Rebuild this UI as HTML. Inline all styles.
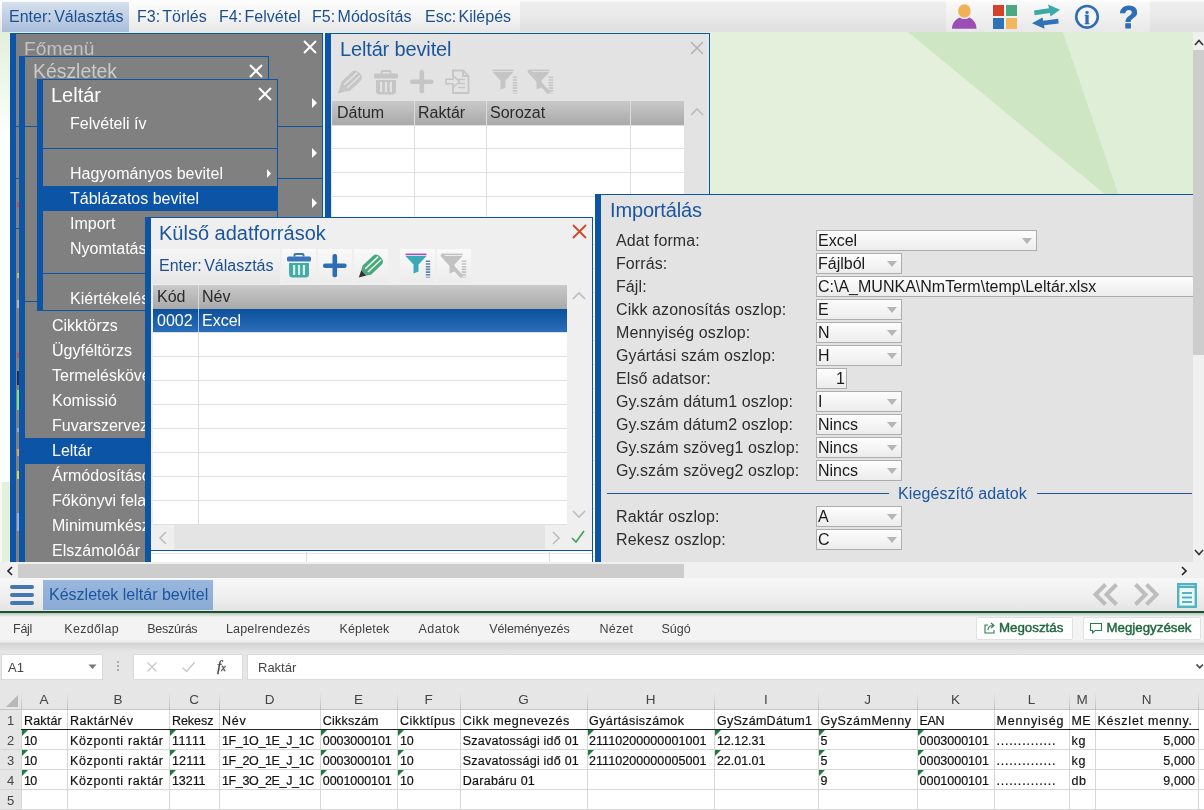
<!DOCTYPE html>
<html lang="hu"><head><meta charset="utf-8"><title>Készletek leltár bevitel</title>
<style>
*{box-sizing:border-box;margin:0;padding:0}
html,body{width:1204px;height:810px;overflow:hidden}
body{position:relative;will-change:transform;background:#e4f0dc;font-family:"Liberation Sans",Arial,sans-serif;font-size:16px;color:#222}
.a{position:absolute}
.t{position:absolute;white-space:pre;line-height:1}
#topbar{left:0;top:0;width:1204px;height:32px;background:linear-gradient(#fff 0,#f6f6f6 1px,#eeeeee 3px,#e9e9e9 50%,#dfdfdf 100%)}
#topbar .t{top:9px;color:#1c4f8f;font-size:16px;word-spacing:-2px}
.win{position:absolute;overflow:hidden}
.menu{background:#808080}
.mi{position:absolute;color:#fff;font-size:16px;white-space:pre;line-height:1}
.bl{background:#0c54a6}
.hd{background:linear-gradient(#c9c9c9,#a9a9a9)}
.lbl{position:absolute;left:616px;font-size:16px;letter-spacing:0.1px;color:#2e2e2e;white-space:pre;line-height:1}
.inp{position:absolute;left:816px;height:21px;background:linear-gradient(#fdfdfd,#ececec);border:1px solid #adadad;font-size:16px;line-height:20px;padding-left:1px;color:#1a1a1a;white-space:pre}
.cb{width:86px}
.cb:after{content:"";position:absolute;right:4.5px;top:7px;border:5.5px solid transparent;border-top:6.5px solid #b6b6b6;border-bottom:0}
</style></head><body>
<!-- WORKSPACE BG -->
<svg class="a" style="left:0;top:32px" width="1204" height="532"><polygon points="908,0 1063,0 1124,178" fill="#cfe6c5"/><polygon points="1063,0 1193,0 1193,532 1124,178" fill="#dfeed6"/><defs><linearGradient id="lg" x1="0" y1="0" x2="0" y2="1"><stop offset="0" stop-color="#e2efda"/><stop offset="1" stop-color="#fdfefd"/></linearGradient></defs><rect x="0" y="0" width="10" height="100" fill="url(#lg)"/><rect x="0" y="100" width="10" height="350" fill="#fdfefd"/><rect x="0" y="450" width="2" height="82" fill="#f6faf3"/></svg>
<!-- TOPBAR -->
<div id="topbar" class="a">
<div class="a" style="left:0;top:1px;width:520px;height:31px;background:linear-gradient(#fdfdfd,#f4f4f4 50%,#e7e7e7)"></div><div class="a" style="left:2px;top:2px;width:127px;height:30px;background:linear-gradient(#d6e0ed,#a9bedb)"></div>
<span class="t" style="left:9px">Enter: Választás</span>
<span class="t" style="left:137px">F3: Törlés</span>
<span class="t" style="left:219px">F4: Felvétel</span>
<span class="t" style="left:312px">F5: Módosítás</span>
<span class="t" style="left:425px">Esc: Kilépés</span>
</div>
<!--ICONS_S--><div class="a" style="left:946px;top:0;width:204px;height:32px;background:linear-gradient(#fff 0,#f8f8f8 3px,#f1f1f1 50%,#e8e8e8)"></div>
<svg class="a" style="left:950px;top:2px" width="30" height="30"><ellipse cx="14.4" cy="9" rx="6.3" ry="6.8" fill="#f0b055"/><path d="M2 26.8C2 20 7 16.5 10 15.5C12 17.5 17 17.5 19 15.5C22 16.5 26.5 20 26.5 26.8Z" fill="#9a4eb6"/></svg>
<div class="a" style="left:993px;top:5px;width:11px;height:11px;background:#d3432b"></div>
<div class="a" style="left:1006px;top:5px;width:11px;height:11px;background:#4aa982"></div>
<div class="a" style="left:993px;top:18px;width:11px;height:11px;background:#2e72b8"></div>
<div class="a" style="left:1006px;top:18px;width:11px;height:11px;background:#f1b75c"></div>
<svg class="a" style="left:1030px;top:2px" width="34" height="30"><path d="M4 8.6L19 6.2L18 2.4L30 7.8L20.5 14.6L19.8 11L4.6 13.2Z" fill="#3aa9a8"/><path d="M28.6 21.6L14 23.2L14.5 26.8L2 21.3L12.5 15.4L13.2 18.8L28.2 16.8Z" fill="#2e72b8"/></svg>
<svg class="a" style="left:1073px;top:3px" width="28" height="28"><circle cx="14" cy="13.8" r="10.8" fill="#f4f6f9" stroke="#2e6db4" stroke-width="2.6"/><text x="14" y="20.5" text-anchor="middle" font-family="Liberation Serif,serif" font-weight="bold" font-size="18" fill="#2e6db4" stroke="#2e6db4" stroke-width="0.5">i</text></svg>
<span class="t" style="left:1119px;top:1px;font-size:32px;font-weight:bold;color:#2e6db4;line-height:32px;-webkit-text-stroke:1px #2e6db4">?</span>
<!--ICONS_E-->
<!-- Főmenü -->
<div class="win menu" style="left:10px;top:33px;width:313px;height:529px;border-top:1px solid #0c54a6;border-right:1px solid #0c54a6">
 <div class="a bl" style="left:0;top:0;width:6px;height:529px"></div>
 <span class="mi" style="left:14px;top:5px;font-size:19.2px;color:#c2c2c2">Főmenü</span>
 <svg class="a" style="left:293px;top:6px" width="14" height="14"><path d="M1 1L13 13M13 1L1 13" stroke="#fff" stroke-width="2" fill="none"/></svg>
 <div class="a bl" style="left:6px;top:92px;width:307px;height:1px"></div>
 <div class="a bl" style="left:6px;top:144px;width:307px;height:1px"></div>
 <div class="a bl" style="left:6px;top:194px;width:307px;height:1px"></div>
 <svg class="a" style="left:301px;top:63px" width="7" height="12"><path d="M1 1L6 6L1 11Z" fill="#fff"/></svg>
 <svg class="a" style="left:301px;top:113px" width="7" height="12"><path d="M1 1L6 6L1 11Z" fill="#fff"/></svg>
 <svg class="a" style="left:301px;top:163px" width="7" height="12"><path d="M1 1L6 6L1 11Z" fill="#fff"/></svg>
 <div class="a" style="left:6.5px;top:168px;width:2px;height:5px;background:#c0504d"></div>
 <div class="a" style="left:6.5px;top:239px;width:2px;height:5px;background:#b5c95a"></div>
 <div class="a" style="left:6.5px;top:266px;width:2px;height:8px;background:#b8b8b8"></div>
 <div class="a" style="left:6.5px;top:319px;width:2px;height:5px;background:#c0504d"></div>
 <div class="a" style="left:6.5px;top:337px;width:2px;height:14px;background:#1f2f55"></div>
 <div class="a" style="left:6.5px;top:356px;width:2px;height:20px;background:#7be08a"></div>
 <div class="a" style="left:6.5px;top:394px;width:2px;height:4px;background:#8fa8d8"></div>
 <div class="a" style="left:6.5px;top:415px;width:2px;height:7px;background:#d8a860"></div>
 <div class="a" style="left:6.5px;top:437px;width:2px;height:8px;background:#d8cf60"></div>
 <div class="a" style="left:6.5px;top:479px;width:2px;height:18px;background:#8fb0dc"></div>
</div>
<!-- Készletek -->
<div class="win menu" style="left:19px;top:56px;width:250px;height:506px;border-top:1px solid #0c54a6;border-right:1px solid #0c54a6">
 <div class="a bl" style="left:0;top:0;width:6px;height:506px"></div>
 <span class="mi" style="left:14px;top:5px;font-size:19.4px;color:#cacaca">Készletek</span>
 <svg class="a" style="left:230px;top:7px" width="14" height="14"><path d="M1 1L13 13M13 1L1 13" stroke="#fff" stroke-width="2" fill="none"/></svg>
 <div class="a bl" style="left:6px;top:69px;width:20px;height:1px"></div>
 <div class="a bl" style="left:6px;top:244px;width:20px;height:1px"></div>
 <span class="mi" style="left:33px;top:261px">Cikktörzs</span>
 <span class="mi" style="left:33px;top:286px">Ügyféltörzs</span>
 <span class="mi" style="left:33px;top:311px">Termeléskövetés</span>
 <span class="mi" style="left:33px;top:336px">Komissió</span>
 <span class="mi" style="left:33px;top:361px">Fuvarszervezés</span>
 <div class="a bl" style="left:0;top:381px;width:250px;height:26px"></div>
 <span class="mi" style="left:33px;top:386px">Leltár</span>
 <span class="mi" style="left:33px;top:411px">Ármódosítások</span>
 <span class="mi" style="left:33px;top:436px">Főkönyvi feladás</span>
 <span class="mi" style="left:33px;top:461px">Minimumkészlet</span>
 <span class="mi" style="left:33px;top:486px">Elszámolóár</span>
</div>
<!-- Leltár -->
<div class="win menu" style="left:37px;top:79px;width:241px;height:232px;border-top:1px solid #0c54a6;border-right:1px solid #0c54a6;border-bottom:1px solid #0c54a6">
 <div class="a bl" style="left:0;top:0;width:6px;height:232px"></div>
 <span class="mi" style="left:14px;top:5px;font-size:20px">Leltár</span>
 <svg class="a" style="left:221px;top:7px" width="14" height="14"><path d="M1 1L13 13M13 1L1 13" stroke="#fff" stroke-width="2" fill="none"/></svg>
 <span class="mi" style="left:33px;top:36px">Felvételi ív</span>
 <div class="a bl" style="left:6px;top:68px;width:235px;height:1px"></div>
 <span class="mi" style="left:33px;top:86px">Hagyományos bevitel</span>
 <svg class="a" style="left:229px;top:88px" width="6" height="11"><path d="M1 1L5 5.5L1 10Z" fill="#fff"/></svg>
 <div class="a bl" style="left:6px;top:106px;width:235px;height:25px"></div>
 <span class="mi" style="left:33px;top:111px">Táblázatos bevitel</span>
 <span class="mi" style="left:33px;top:136px">Import</span>
 <span class="mi" style="left:33px;top:161px">Nyomtatás</span>
 <div class="a bl" style="left:6px;top:193px;width:235px;height:1px"></div>
 <span class="mi" style="left:33px;top:211px">Kiértékelés</span>
</div>

<!-- Leltár bevitel -->
<div class="win" style="left:325px;top:33px;width:385px;height:529px;background:#e3e3e3;border-top:1px solid #0c54a6;border-right:1px solid #0c54a6">
 <div class="a bl" style="left:0;top:0;width:6px;height:529px"></div>
 <div class="a" style="left:382px;top:0;width:2px;height:529px;background:#dfe9f5"></div>
 <span class="t" style="left:15px;top:5px;font-size:20px;color:#1b559e;letter-spacing:-0.15px">Leltár bevitel</span>
 <svg class="a" style="left:365px;top:7px" width="14" height="14"><path d="M1 1L13 13M13 1L1 13" stroke="#b4b4b4" stroke-width="1.6" fill="none"/></svg>
 <!--LBI_S--><svg class="a" style="left:12px;top:35px" width="27" height="26"><g transform="translate(0.8,24.6) rotate(-43)"><path d="M0 0L7 -3.8V3.8Z" fill="#c5c5c5"/><path d="M7 -3.8L11 -6.2H25Q30 -6.2 30 0Q30 6.2 25 6.2H11L7 3.8Z" fill="#c5c5c5"/><path d="M10.5 -2.1H28.5M10.5 2.1H28.5" stroke="#e3e3e3" stroke-width="1.5"/></g></svg><svg class="a" style="left:48px;top:35px" width="26" height="27"><path d="M8.5 4.5V3Q8.5 2 9.5 2H16.5Q17.5 2 17.5 3V4.5" stroke="#c5c5c5" stroke-width="2" fill="none"/><rect x="1" y="4.5" width="24" height="5" rx="1.5" fill="#c5c5c5"/><path d="M3 11H23V22Q23 25.5 19.5 25.5H6.5Q3 25.5 3 22Z" fill="#c5c5c5"/><rect x="7" y="13" width="2.2" height="10" fill="#e3e3e3"/><rect x="11.9" y="13" width="2.2" height="10" fill="#e3e3e3"/><rect x="16.8" y="13" width="2.2" height="10" fill="#e3e3e3"/></svg><svg class="a" style="left:85px;top:36px" width="24" height="24"><rect x="0" y="9.4" width="23.6" height="4.6" rx="2" fill="#c5c5c5"/><rect x="9.5" y="0" width="4.6" height="23.2" rx="2" fill="#c5c5c5"/></svg><svg class="a" style="left:120px;top:35px" width="26" height="26"><g stroke="#c5c5c5" fill="none" stroke-width="1.8"><path d="M8 7V1.5H18L23.5 7V24H8V18"/><path d="M18 1.5V7H23.5"/><path d="M13 10.5H20M13 14.5H20M13 18.5H20" stroke-width="1.5"/></g><path d="M1 10.2H8V6.5L14.5 12.5L8 18.5V14.8H1Z" fill="#e3e3e3" stroke="#c5c5c5" stroke-width="1.6"/></svg><svg class="a" style="left:166px;top:34px" width="28" height="27"><rect x="1.5" y="1.6" width="21" height="1.6" fill="#c5c5c5"/><path d="M1.5 4H22.5L14.5 12.5V19.5L9.5 21.5V12.5Z" fill="#c5c5c5"/><path d="M24 8.5V25.5" stroke="#c5c5c5" stroke-width="4.4" stroke-dasharray="1.6 1.1"/></svg><svg class="a" style="left:202px;top:34px" width="28" height="27"><rect x="1.5" y="1.6" width="21" height="1.6" fill="#c5c5c5"/><path d="M1.5 4H22.5L14.5 12.5V19.5L9.5 21.5V12.5Z" fill="#c5c5c5"/><path d="M24 8.5V25.5" stroke="#c5c5c5" stroke-width="4.4" stroke-dasharray="1.6 1.1"/><path d="M1.5 2.5L22 25" stroke="#c5c5c5" stroke-width="3.4"/></svg><!--LBI_E-->
 <div class="a hd" style="left:7px;top:67px;width:352px;height:23.5px"></div>
 <div class="a" style="left:7px;top:91px;width:352px;height:438px;background:#fff;background-image:linear-gradient(#e2e2e2,#e2e2e2);background-size:100% 1px;background-repeat:no-repeat"></div>
 <div class="a" style="left:7px;top:91px;width:352px;height:438px;background:repeating-linear-gradient(to bottom,transparent 0,transparent 23px,#e0e0e0 23px,#e0e0e0 24px)"></div>
 <div class="a" style="left:89px;top:67px;width:1px;height:462px;background:#dcdcdc"></div>
 <div class="a" style="left:161px;top:67px;width:1px;height:462px;background:#dcdcdc"></div>
 <div class="a" style="left:305px;top:67px;width:1px;height:462px;background:#dcdcdc"></div>
 <span class="t" style="left:12px;top:71px;color:#2a2a2a">Dátum</span>
 <span class="t" style="left:93px;top:71px;color:#2a2a2a">Raktár</span>
 <span class="t" style="left:165px;top:71px;color:#2a2a2a">Sorozat</span>
 <svg class="a" style="left:364px;top:73px" width="16" height="10"><path d="M2 8L8 2L14 8" stroke="#bdbdbd" stroke-width="1.6" fill="none"/></svg>
</div>
<!-- Külső adatforrások -->
<div class="win" style="left:145px;top:217px;width:448px;height:345px;background:#efefef;border-top:1px solid #0c54a6;border-right:1px solid #0c54a6">
 <div class="a bl" style="left:0;top:0;width:6px;height:345px"></div>
 <span class="t" style="left:14px;top:5px;font-size:20px;color:#1b559e">Külső adatforrások</span>
 <svg class="a" style="left:427px;top:6px" width="15" height="15"><path d="M1 1L14 14M14 1L1 14" stroke="#cb4a2c" stroke-width="1.8" fill="none"/></svg>
 <div class="a" style="left:7px;top:31px;width:128px;height:35px;background:linear-gradient(#f6f6f6,#e6e6e6)"></div>
 <span class="t" style="left:14px;top:40px;color:#1c4f8f;word-spacing:-2px">Enter: Választás</span>
 <!--KAI_S--><div class="a" style="left:137px;top:31px;width:34px;height:34px;background:linear-gradient(#f9f9f9,#ececec)"></div><div class="a" style="left:173px;top:31px;width:34px;height:34px;background:linear-gradient(#f9f9f9,#ececec)"></div><div class="a" style="left:209px;top:31px;width:34px;height:34px;background:linear-gradient(#f9f9f9,#ececec)"></div><div class="a" style="left:255px;top:31px;width:35px;height:34px;background:linear-gradient(#f9f9f9,#ececec)"></div><div class="a" style="left:292px;top:31px;width:34px;height:34px;background:linear-gradient(#f9f9f9,#ececec)"></div><svg class="a" style="left:141px;top:34px" width="26" height="27"><path d="M8.5 4.5V3Q8.5 2 9.5 2H16.5Q17.5 2 17.5 3V4.5" stroke="#3a76b8" stroke-width="2" fill="none"/><rect x="1" y="4.5" width="24" height="5" rx="1.5" fill="#3a76b8"/><path d="M3 11H23V22Q23 25.5 19.5 25.5H6.5Q3 25.5 3 22Z" fill="#45aaa4"/><rect x="7" y="13" width="2.2" height="10" fill="#d5efec"/><rect x="11.9" y="13" width="2.2" height="10" fill="#d5efec"/><rect x="16.8" y="13" width="2.2" height="10" fill="#d5efec"/></svg><svg class="a" style="left:178px;top:36px" width="24" height="24"><rect x="0" y="9.4" width="23.6" height="4.6" rx="2" fill="#2e6db4"/><rect x="9.5" y="0" width="4.6" height="23.2" rx="2" fill="#2e6db4"/></svg><svg class="a" style="left:213px;top:35px" width="27" height="26"><g transform="translate(0.8,24.6) rotate(-43)"><path d="M0 0L7 -3.8V3.8Z" fill="#333"/><path d="M7 -3.8L11 -6.2H25Q30 -6.2 30 0Q30 6.2 25 6.2H11L7 3.8Z" fill="#4aa97c"/><path d="M10.5 -2.1H28.5M10.5 2.1H28.5" stroke="#e9f5ee" stroke-width="1.5"/></g></svg><svg class="a" style="left:259px;top:34px" width="28" height="27"><rect x="1.5" y="1.6" width="21" height="1.6" fill="#9b4fb5"/><path d="M1.5 4H22.5L14.5 12.5V19.5L9.5 21.5V12.5Z" fill="#3aa9b8"/><path d="M24 8.5V25.5" stroke="#5f82ab" stroke-width="4.4" stroke-dasharray="1.6 1.1"/></svg><svg class="a" style="left:295px;top:34px" width="28" height="27"><rect x="1.5" y="1.6" width="21" height="1.6" fill="#c2c2c2"/><path d="M1.5 4H22.5L14.5 12.5V19.5L9.5 21.5V12.5Z" fill="#c2c2c2"/><path d="M24 8.5V25.5" stroke="#c2c2c2" stroke-width="4.4" stroke-dasharray="1.6 1.1"/><path d="M1.5 2.5L22 25" stroke="#c2c2c2" stroke-width="3.4"/></svg><!--KAI_E-->
 <div class="a hd" style="left:8px;top:66.5px;width:414px;height:24px"></div>
 <div class="a" style="left:8px;top:90.5px;width:414px;height:216.5px;background:#fff"></div>
 <div class="a" style="left:8px;top:91px;width:414px;height:216px;background:repeating-linear-gradient(to bottom,transparent 0,transparent 23px,#e0e0e0 23px,#e0e0e0 24px)"></div>
 <div class="a" style="left:53px;top:67px;width:1px;height:240px;background:#dcdcdc"></div>
 <div class="a" style="left:8px;top:90.5px;width:414px;height:23px;background:linear-gradient(#0c4f9a,#2a6dba)"></div>
 <div class="a" style="left:53px;top:90.5px;width:1px;height:23px;background:#a9c3e2"></div>
 <span class="t" style="left:12px;top:71px;color:#2a2a2a">Kód</span>
 <span class="t" style="left:57px;top:71px;color:#2a2a2a">Név</span>
 <span class="t" style="left:12px;top:95px;color:#fff">0002</span>
 <span class="t" style="left:57px;top:95px;color:#fff">Excel</span>
 <svg class="a" style="left:426px;top:73px" width="16" height="10"><path d="M2 8L8 2L14 8" stroke="#bdbdbd" stroke-width="1.6" fill="none"/></svg>
 <svg class="a" style="left:426px;top:291px" width="16" height="10"><path d="M2 2L8 8L14 2" stroke="#bdbdbd" stroke-width="1.6" fill="none"/></svg>
 <div class="a" style="left:7px;top:307px;width:415px;height:24px;background:#e4e4e4"></div>
 <div class="a" style="left:7px;top:307px;width:22px;height:24px;background:#efefef"></div>
 <div class="a" style="left:400px;top:307px;width:22px;height:24px;background:#efefef"></div>
 <svg class="a" style="left:13px;top:312px" width="10" height="16"><path d="M8 2L2 8L8 14" stroke="#bdbdbd" stroke-width="1.6" fill="none"/></svg>
 <svg class="a" style="left:406px;top:312px" width="10" height="16"><path d="M2 2L8 8L2 14" stroke="#bdbdbd" stroke-width="1.6" fill="none"/></svg>
 <svg class="a" style="left:425px;top:311px" width="16" height="16"><path d="M2 9L6 13L14 2" stroke="#3da24a" stroke-width="1.6" fill="none"/></svg>
 <div class="a" style="left:6px;top:332px;width:441px;height:1px;background:#0c54a6"></div>
 <div class="a" style="left:6px;top:333px;width:441px;height:12px;background:#fff"></div><div class="a" style="left:6px;top:335px;width:441px;height:1px;background:#e6e6e6"></div><div class="a" style="left:161px;top:334px;width:1px;height:11px;background:#dcdcdc"></div><div class="a" style="left:404px;top:334px;width:1px;height:11px;background:#dcdcdc"></div>
</div>
<!-- Importálás -->
<div class="win" style="left:595px;top:194px;width:598px;height:368px;background:#e3e3e3;border-top:1px solid #0c54a6">
 <div class="a bl" style="left:0;top:0;width:6px;height:368px"></div>
</div>
<span class="t" style="left:610px;top:200px;font-size:20px;color:#1b559e;letter-spacing:-0.15px">Importálás</span>
<span class="lbl" style="top:233px">Adat forma:</span><div class="inp cb" style="top:230px;width:221px">Excel</div>
<span class="lbl" style="top:256px">Forrás:</span><div class="inp cb" style="top:253px">Fájlból</div>
<span class="lbl" style="top:279px">Fájl:</span><div class="inp" style="top:276px;width:377px;border-right:0">C:\A_MUNKA\NmTerm\temp\Leltár.xlsx</div>
<span class="lbl" style="top:302px">Cikk azonosítás oszlop:</span><div class="inp cb" style="top:299px">E</div>
<span class="lbl" style="top:325px">Mennyiség oszlop:</span><div class="inp cb" style="top:322px">N</div>
<span class="lbl" style="top:348px">Gyártási szám oszlop:</span><div class="inp cb" style="top:345px">H</div>
<span class="lbl" style="top:371px">Első adatsor:</span><div class="inp" style="top:368px;width:31px;text-align:right;padding-right:1px">1</div>
<span class="lbl" style="top:394px">Gy.szám dátum1 oszlop:</span><div class="inp cb" style="top:391px">I</div>
<span class="lbl" style="top:417px">Gy.szám dátum2 oszlop:</span><div class="inp cb" style="top:414px">Nincs</div>
<span class="lbl" style="top:440px">Gy.szám szöveg1 oszlop:</span><div class="inp cb" style="top:437px">Nincs</div>
<span class="lbl" style="top:463px">Gy.szám szöveg2 oszlop:</span><div class="inp cb" style="top:460px">Nincs</div>
<div class="a" style="left:607px;top:493px;width:282px;height:1px;background:#1b559e"></div>
<span class="t" style="left:898px;top:486px;color:#1b559e;letter-spacing:0.1px">Kiegészítő adatok</span>
<div class="a" style="left:1037px;top:493px;width:155px;height:1px;background:#1b559e"></div>
<span class="lbl" style="top:509px">Raktár oszlop:</span><div class="inp cb" style="top:506px">A</div>
<span class="lbl" style="top:532px">Rekesz oszlop:</span><div class="inp cb" style="top:529px">C</div>

<!--WINDOWS3-->
<!-- vertical scrollbar -->
<div class="a" style="left:1193px;top:32px;width:11px;height:530px;background:#f0f0f0"></div>
<div class="a" style="left:1193px;top:50px;width:11px;height:305px;background:#cdcdcd"></div>
<svg class="a" style="left:1193px;top:37px" width="11" height="10"><path d="M2 8L6 3.5L10 8" stroke="#333" stroke-width="1.6" fill="none"/></svg>
<svg class="a" style="left:1193px;top:547px" width="11" height="10"><path d="M2 3L6 7.5L10 3" stroke="#333" stroke-width="1.6" fill="none"/></svg>
<!-- horizontal scrollbar -->
<div class="a" style="left:0;top:562px;width:1204px;height:16px;background:#f0f0f0"></div>
<div class="a" style="left:18px;top:564px;width:666px;height:14px;background:#cdcdcd"></div>
<svg class="a" style="left:5px;top:565px" width="10" height="12"><path d="M7 2L3 6L7 10" stroke="#222" stroke-width="1.6" fill="none"/></svg>
<svg class="a" style="left:1179px;top:565px" width="10" height="12"><path d="M3 2L7 6L3 10" stroke="#222" stroke-width="1.6" fill="none"/></svg>
<!-- taskbar -->
<div class="a" style="left:0;top:578px;width:1204px;height:33px;background:linear-gradient(#f7f7f7,#eeeeee 60%,#e4e4e4)"></div>
<div class="a" style="left:10px;top:585px;width:24px;height:4px;border-radius:2px;background:#4577b4"></div>
<div class="a" style="left:10px;top:593px;width:24px;height:4px;border-radius:2px;background:#4577b4"></div>
<div class="a" style="left:10px;top:601px;width:24px;height:4px;border-radius:2px;background:#4577b4"></div>
<div class="a" style="left:43px;top:580px;width:170px;height:30px;background:linear-gradient(#9ab7dd,#8aabd4)"></div>
<span class="t" style="left:49px;top:587px;color:#1b559e">Készletek leltár bevitel</span>
<svg class="a" style="left:1092px;top:582px" width="68" height="26"><g stroke="#bdbdbd" stroke-width="4" fill="none"><path d="M13.5 2.5L3.5 12.5L13.5 22.5"/><path d="M24.5 2.5L14.5 12.5L24.5 22.5"/><path d="M43.5 2.5L53.5 12.5L43.5 22.5"/><path d="M54.5 2.5L64.5 12.5L54.5 22.5"/></g></svg>
<svg class="a" style="left:1177px;top:583px" width="20" height="25"><rect x="1.2" y="1.2" width="17.6" height="22.6" fill="#eef7f8" stroke="#4fb3c2" stroke-width="2.4"/><g stroke="#4fb3c2" stroke-width="2"><path d="M1 4H19"/><path d="M5 10H15M5 14.5H15M5 19H15"/></g></svg>

<!--TASKBAR-->
<!--EXCEL_START-->
<style>
.c{position:absolute;white-space:pre;line-height:1;font-size:12.5px;color:#111;-webkit-text-stroke:0.2px #111}
.rt{position:absolute;white-space:pre;line-height:1;font-size:12.5px;color:#404040;top:623px}
.rb{color:#21683f;font-size:13.3px;-webkit-text-stroke:0.45px #21683f;top:621px}
.ch{position:absolute;top:693px;text-align:center;font-size:13.5px;line-height:1;color:#444}
.rh{position:absolute;left:0;width:21px;text-align:center;font-size:13px;line-height:1;color:#444}
</style>
<div class="a" style="left:0;top:611px;width:1204px;height:199px;background:#e6e6e6"></div>
<div class="a" style="left:0;top:611px;width:1204px;height:32px;background:#f3f3f3"></div>
<div class="a" style="left:0;top:611px;width:1204px;height:6px;background:linear-gradient(#1f4f30 0,#1f4f30 30%,#b9cfbf 40%,#f3f3f3)"></div>
<div class="a" style="left:0;top:640px;width:1204px;height:3px;background:linear-gradient(#f3f3f3,#e2e2e2)"></div>
<div class="a" style="left:0;top:643px;width:1204px;height:9px;background:linear-gradient(#d2d2d2,#e6e6e6)"></div>
<span class="rt" style="left:13.0px;letter-spacing:-0.25px">Fájl</span>
<span class="rt" style="left:64.3px;letter-spacing:0.32px">Kezdőlap</span>
<span class="rt" style="left:147.3px;letter-spacing:-0.26px">Beszúrás</span>
<span class="rt" style="left:226.0px;letter-spacing:0.17px">Lapelrendezés</span>
<span class="rt" style="left:339.4px;letter-spacing:0.19px">Képletek</span>
<span class="rt" style="left:418.5px;letter-spacing:0.42px">Adatok</span>
<span class="rt" style="left:489.3px;letter-spacing:-0.15px">Véleményezés</span>
<span class="rt" style="left:599.5px;letter-spacing:0.21px">Nézet</span>
<span class="rt" style="left:661.4px;letter-spacing:0.03px">Súgó</span>
<div class="a" style="left:976px;top:617px;width:97px;height:23px;background:#fff;border:1px solid #e1e1e1;border-radius:2px"></div>
<div class="a" style="left:1083px;top:617px;width:118px;height:23px;background:#fff;border:1px solid #e1e1e1;border-radius:2px"></div>
<svg class="a" style="left:983px;top:621px" width="14" height="14"><g stroke="#2b7a52" stroke-width="1.1" fill="none"><path d="M5 4H2V12H11V9"/><path d="M5 9C5 6 7 4.5 10 4.5M8 2L11 4.5L8 7"/></g></svg>
<svg class="a" style="left:1089px;top:621px" width="14" height="14"><path d="M1.5 2.5H12.5V9.5H6L3.5 12V9.5H1.5Z" stroke="#2b7a52" stroke-width="1.1" fill="none"/></svg>
<span class="rt rb" style="left:999px">Megosztás</span>
<span class="rt rb" style="left:1106.5px">Megjegyzések</span>
<div class="a" style="left:1px;top:654px;width:102px;height:26px;background:#fff;border:1px solid #dadada"></div>
<span class="t" style="left:8px;top:661px;font-size:13px;color:#444">A1</span>
<svg class="a" style="left:88px;top:664px" width="9" height="6"><path d="M0.5 0.5H8.5L4.5 5Z" fill="#777"/></svg>
<div class="a" style="left:117px;top:661px;width:2px;height:2px;background:#aaa;box-shadow:0 4px #aaa,0 8px #aaa"></div>
<div class="a" style="left:133px;top:654px;width:110px;height:26px;background:#fff;border:1px solid #dadada"></div>
<svg class="a" style="left:146px;top:661px" width="12" height="12"><path d="M1.5 1.5L10.5 10.5M10.5 1.5L1.5 10.5" stroke="#c6c6c6" stroke-width="1.3" fill="none"/></svg>
<svg class="a" style="left:181px;top:661px" width="15" height="12"><path d="M1.5 6.5L5.5 10.5L13.5 1.5" stroke="#c6c6c6" stroke-width="1.3" fill="none"/></svg>
<span class="t" style="left:217px;top:658px;font-family:'Liberation Serif',serif;font-style:italic;font-size:15.5px;color:#4a4a4a;-webkit-text-stroke:0.3px #4a4a4a">f<span style="font-size:10px">x</span></span>
<div class="a" style="left:247px;top:654px;width:957px;height:26px;background:#fff;border:1px solid #dadada;border-right:0"></div>
<span class="t" style="left:258px;top:661px;font-size:13px;color:#444">Raktár</span>
<svg class="a" style="left:1195px;top:663px" width="10" height="8"><path d="M1.5 1.5L4.7 4.8L7.9 1.5" stroke="#444" stroke-width="1.7" fill="none"/></svg>
<div class="a" style="left:21px;top:710px;width:1183px;height:100px;background:#fff"></div>
<div class="a" style="left:0;top:749px;width:1204px;height:1px;background:#d6d6d6"></div>
<div class="a" style="left:0;top:769px;width:1204px;height:1px;background:#d6d6d6"></div>
<div class="a" style="left:0;top:789px;width:1204px;height:1px;background:#d6d6d6"></div>
<div class="a" style="left:0;top:809px;width:1204px;height:1px;background:#d6d6d6"></div>
<div class="a" style="left:0;top:709px;width:1204px;height:1px;background:#c4c4c4"></div>
<div class="a" style="left:21px;top:710px;width:1px;height:100px;background:#d6d6d6"></div>
<div class="a" style="left:21px;top:692px;width:1px;height:18px;background:linear-gradient(#e6e6e6,#bdbdbd)"></div>
<div class="a" style="left:67px;top:710px;width:1px;height:100px;background:#d6d6d6"></div>
<div class="a" style="left:67px;top:692px;width:1px;height:18px;background:linear-gradient(#e6e6e6,#bdbdbd)"></div>
<div class="a" style="left:169px;top:710px;width:1px;height:100px;background:#d6d6d6"></div>
<div class="a" style="left:169px;top:692px;width:1px;height:18px;background:linear-gradient(#e6e6e6,#bdbdbd)"></div>
<div class="a" style="left:219px;top:710px;width:1px;height:100px;background:#d6d6d6"></div>
<div class="a" style="left:219px;top:692px;width:1px;height:18px;background:linear-gradient(#e6e6e6,#bdbdbd)"></div>
<div class="a" style="left:320px;top:710px;width:1px;height:100px;background:#d6d6d6"></div>
<div class="a" style="left:320px;top:692px;width:1px;height:18px;background:linear-gradient(#e6e6e6,#bdbdbd)"></div>
<div class="a" style="left:397px;top:710px;width:1px;height:100px;background:#d6d6d6"></div>
<div class="a" style="left:397px;top:692px;width:1px;height:18px;background:linear-gradient(#e6e6e6,#bdbdbd)"></div>
<div class="a" style="left:460px;top:710px;width:1px;height:100px;background:#d6d6d6"></div>
<div class="a" style="left:460px;top:692px;width:1px;height:18px;background:linear-gradient(#e6e6e6,#bdbdbd)"></div>
<div class="a" style="left:587px;top:710px;width:1px;height:100px;background:#d6d6d6"></div>
<div class="a" style="left:587px;top:692px;width:1px;height:18px;background:linear-gradient(#e6e6e6,#bdbdbd)"></div>
<div class="a" style="left:714px;top:710px;width:1px;height:100px;background:#d6d6d6"></div>
<div class="a" style="left:714px;top:692px;width:1px;height:18px;background:linear-gradient(#e6e6e6,#bdbdbd)"></div>
<div class="a" style="left:818px;top:710px;width:1px;height:100px;background:#d6d6d6"></div>
<div class="a" style="left:818px;top:692px;width:1px;height:18px;background:linear-gradient(#e6e6e6,#bdbdbd)"></div>
<div class="a" style="left:917px;top:710px;width:1px;height:100px;background:#d6d6d6"></div>
<div class="a" style="left:917px;top:692px;width:1px;height:18px;background:linear-gradient(#e6e6e6,#bdbdbd)"></div>
<div class="a" style="left:994px;top:710px;width:1px;height:100px;background:#d6d6d6"></div>
<div class="a" style="left:994px;top:692px;width:1px;height:18px;background:linear-gradient(#e6e6e6,#bdbdbd)"></div>
<div class="a" style="left:1069px;top:710px;width:1px;height:100px;background:#d6d6d6"></div>
<div class="a" style="left:1069px;top:692px;width:1px;height:18px;background:linear-gradient(#e6e6e6,#bdbdbd)"></div>
<div class="a" style="left:1095px;top:710px;width:1px;height:100px;background:#d6d6d6"></div>
<div class="a" style="left:1095px;top:692px;width:1px;height:18px;background:linear-gradient(#e6e6e6,#bdbdbd)"></div>
<div class="a" style="left:1198px;top:710px;width:1px;height:100px;background:#d6d6d6"></div>
<div class="a" style="left:1198px;top:692px;width:1px;height:18px;background:linear-gradient(#e6e6e6,#bdbdbd)"></div>
<div class="a" style="left:21px;top:729px;width:1178px;height:1px;background:#262626"></div>
<span class="ch" style="left:21px;width:46px">A</span>
<span class="ch" style="left:67px;width:102px">B</span>
<span class="ch" style="left:169px;width:50px">C</span>
<span class="ch" style="left:219px;width:101px">D</span>
<span class="ch" style="left:320px;width:77px">E</span>
<span class="ch" style="left:397px;width:63px">F</span>
<span class="ch" style="left:460px;width:127px">G</span>
<span class="ch" style="left:587px;width:127px">H</span>
<span class="ch" style="left:714px;width:104px">I</span>
<span class="ch" style="left:818px;width:99px">J</span>
<span class="ch" style="left:917px;width:77px">K</span>
<span class="ch" style="left:994px;width:75px">L</span>
<span class="ch" style="left:1069px;width:26px">M</span>
<span class="ch" style="left:1095px;width:103px">N</span>
<span class="rh" style="top:714px">1</span>
<span class="rh" style="top:734px">2</span>
<span class="rh" style="top:754px">3</span>
<span class="rh" style="top:774px">4</span>
<span class="rh" style="top:794px">5</span>
<svg class="a" style="left:5px;top:694px" width="14" height="14"><path d="M13 1V13H1Z" fill="#b8b8b8"/></svg>
<svg class="a" style="left:22px;top:730px" width="6" height="6"><path d="M0 0H6L0 6Z" fill="#1e7b3c"/></svg>
<svg class="a" style="left:170px;top:730px" width="6" height="6"><path d="M0 0H6L0 6Z" fill="#1e7b3c"/></svg>
<svg class="a" style="left:321px;top:730px" width="6" height="6"><path d="M0 0H6L0 6Z" fill="#1e7b3c"/></svg>
<svg class="a" style="left:398px;top:730px" width="6" height="6"><path d="M0 0H6L0 6Z" fill="#1e7b3c"/></svg>
<svg class="a" style="left:819px;top:730px" width="6" height="6"><path d="M0 0H6L0 6Z" fill="#1e7b3c"/></svg>
<svg class="a" style="left:918px;top:730px" width="6" height="6"><path d="M0 0H6L0 6Z" fill="#1e7b3c"/></svg>
<svg class="a" style="left:588px;top:730px" width="6" height="6"><path d="M0 0H6L0 6Z" fill="#1e7b3c"/></svg>
<svg class="a" style="left:715px;top:730px" width="6" height="6"><path d="M0 0H6L0 6Z" fill="#1e7b3c"/></svg>
<svg class="a" style="left:22px;top:750px" width="6" height="6"><path d="M0 0H6L0 6Z" fill="#1e7b3c"/></svg>
<svg class="a" style="left:170px;top:750px" width="6" height="6"><path d="M0 0H6L0 6Z" fill="#1e7b3c"/></svg>
<svg class="a" style="left:321px;top:750px" width="6" height="6"><path d="M0 0H6L0 6Z" fill="#1e7b3c"/></svg>
<svg class="a" style="left:398px;top:750px" width="6" height="6"><path d="M0 0H6L0 6Z" fill="#1e7b3c"/></svg>
<svg class="a" style="left:819px;top:750px" width="6" height="6"><path d="M0 0H6L0 6Z" fill="#1e7b3c"/></svg>
<svg class="a" style="left:918px;top:750px" width="6" height="6"><path d="M0 0H6L0 6Z" fill="#1e7b3c"/></svg>
<svg class="a" style="left:588px;top:750px" width="6" height="6"><path d="M0 0H6L0 6Z" fill="#1e7b3c"/></svg>
<svg class="a" style="left:715px;top:750px" width="6" height="6"><path d="M0 0H6L0 6Z" fill="#1e7b3c"/></svg>
<svg class="a" style="left:22px;top:770px" width="6" height="6"><path d="M0 0H6L0 6Z" fill="#1e7b3c"/></svg>
<svg class="a" style="left:170px;top:770px" width="6" height="6"><path d="M0 0H6L0 6Z" fill="#1e7b3c"/></svg>
<svg class="a" style="left:321px;top:770px" width="6" height="6"><path d="M0 0H6L0 6Z" fill="#1e7b3c"/></svg>
<svg class="a" style="left:398px;top:770px" width="6" height="6"><path d="M0 0H6L0 6Z" fill="#1e7b3c"/></svg>
<svg class="a" style="left:819px;top:770px" width="6" height="6"><path d="M0 0H6L0 6Z" fill="#1e7b3c"/></svg>
<svg class="a" style="left:918px;top:770px" width="6" height="6"><path d="M0 0H6L0 6Z" fill="#1e7b3c"/></svg>
<span class="c" style="left:24.1px;top:715px;letter-spacing:0.15px">Raktár</span>
<span class="c" style="left:70.0px;top:715px;letter-spacing:0.49px">RaktárNév</span>
<span class="c" style="left:171.9px;top:715px;letter-spacing:0.00px">Rekesz</span>
<span class="c" style="left:222.0px;top:715px;letter-spacing:0.80px">Név</span>
<span class="c" style="left:322.8px;top:715px;letter-spacing:0.22px">Cikkszám</span>
<span class="c" style="left:400.1px;top:715px;letter-spacing:0.45px">Cikktípus</span>
<span class="c" style="left:462.8px;top:715px;letter-spacing:0.55px">Cikk megnevezés</span>
<span class="c" style="left:589.0px;top:715px;letter-spacing:0.41px">Gyártásiszámok</span>
<span class="c" style="left:716.9px;top:715px;letter-spacing:0.30px">GySzámDátum1</span>
<span class="c" style="left:820.5px;top:715px;letter-spacing:0.50px">GySzámMenny</span>
<span class="c" style="left:919.5px;top:715px;letter-spacing:-0.35px">EAN</span>
<span class="c" style="left:996.5px;top:715px;letter-spacing:0.80px">Mennyiség</span>
<span class="c" style="left:1071.5px;top:715px;letter-spacing:0.25px">ME</span>
<span class="c" style="left:1097.5px;top:715px;letter-spacing:0.77px">Készlet menny.</span>
<span class="c" style="left:24.1px;top:735px;letter-spacing:-0.80px">10</span>
<span class="c" style="left:70.0px;top:735px;letter-spacing:0.64px">Központi raktár</span>
<span class="c" style="left:171.9px;top:735px;letter-spacing:0.66px">11111</span>
<span class="c" style="left:222.0px;top:735px;letter-spacing:-0.36px">1F_1O_1E_J_1C</span>
<span class="c" style="left:322.8px;top:735px;letter-spacing:-0.06px">0003000101</span>
<span class="c" style="left:400.1px;top:735px;letter-spacing:-0.41px">10</span>
<span class="c" style="left:462.8px;top:735px;letter-spacing:0.23px">Szavatossági idő 01</span>
<span class="c" style="left:589.0px;top:735px;letter-spacing:0.07px">21110200000001001</span>
<span class="c" style="left:716.9px;top:735px;letter-spacing:-0.02px">12.12.31</span>
<span class="c" style="left:820.5px;top:735px;letter-spacing:0.00px">5</span>
<span class="c" style="left:919.5px;top:735px;letter-spacing:-0.01px">0003000101</span>
<span class="c" style="left:996.5px;top:735px;letter-spacing:0.80px">..............</span>
<span class="c" style="left:1071.5px;top:735px;letter-spacing:0.80px">kg</span>
<span class="c" style="left:1163.3px;top:735px;letter-spacing:0.08px">5,000</span>
<span class="c" style="left:24.1px;top:755px;letter-spacing:-0.80px">10</span>
<span class="c" style="left:70.0px;top:755px;letter-spacing:0.64px">Központi raktár</span>
<span class="c" style="left:171.9px;top:755px;letter-spacing:0.20px">12111</span>
<span class="c" style="left:222.0px;top:755px;letter-spacing:-0.36px">1F_2O_1E_J_1C</span>
<span class="c" style="left:322.8px;top:755px;letter-spacing:-0.06px">0003000101</span>
<span class="c" style="left:400.1px;top:755px;letter-spacing:-0.41px">10</span>
<span class="c" style="left:462.8px;top:755px;letter-spacing:0.23px">Szavatossági idő 01</span>
<span class="c" style="left:589.0px;top:755px;letter-spacing:0.07px">21110200000005001</span>
<span class="c" style="left:716.9px;top:755px;letter-spacing:-0.02px">22.01.01</span>
<span class="c" style="left:820.5px;top:755px;letter-spacing:0.00px">5</span>
<span class="c" style="left:919.5px;top:755px;letter-spacing:-0.01px">0003000101</span>
<span class="c" style="left:996.5px;top:755px;letter-spacing:0.80px">..............</span>
<span class="c" style="left:1071.5px;top:755px;letter-spacing:0.80px">kg</span>
<span class="c" style="left:1163.3px;top:755px;letter-spacing:0.08px">5,000</span>
<span class="c" style="left:24.1px;top:775px;letter-spacing:-0.80px">10</span>
<span class="c" style="left:70.0px;top:775px;letter-spacing:0.64px">Központi raktár</span>
<span class="c" style="left:171.9px;top:775px;letter-spacing:-0.04px">13211</span>
<span class="c" style="left:222.0px;top:775px;letter-spacing:-0.36px">1F_3O_2E_J_1C</span>
<span class="c" style="left:322.8px;top:775px;letter-spacing:-0.06px">0001000101</span>
<span class="c" style="left:400.1px;top:775px;letter-spacing:-0.41px">10</span>
<span class="c" style="left:462.8px;top:775px;letter-spacing:0.25px">Darabáru 01</span>
<span class="c" style="left:820.5px;top:775px;letter-spacing:0.00px">9</span>
<span class="c" style="left:919.5px;top:775px;letter-spacing:-0.01px">0001000101</span>
<span class="c" style="left:996.5px;top:775px;letter-spacing:0.80px">..............</span>
<span class="c" style="left:1071.5px;top:775px;letter-spacing:0.49px">db</span>
<span class="c" style="left:1163.3px;top:775px;letter-spacing:0.08px">9,000</span>
<!--EXCEL_END-->
</body></html>
